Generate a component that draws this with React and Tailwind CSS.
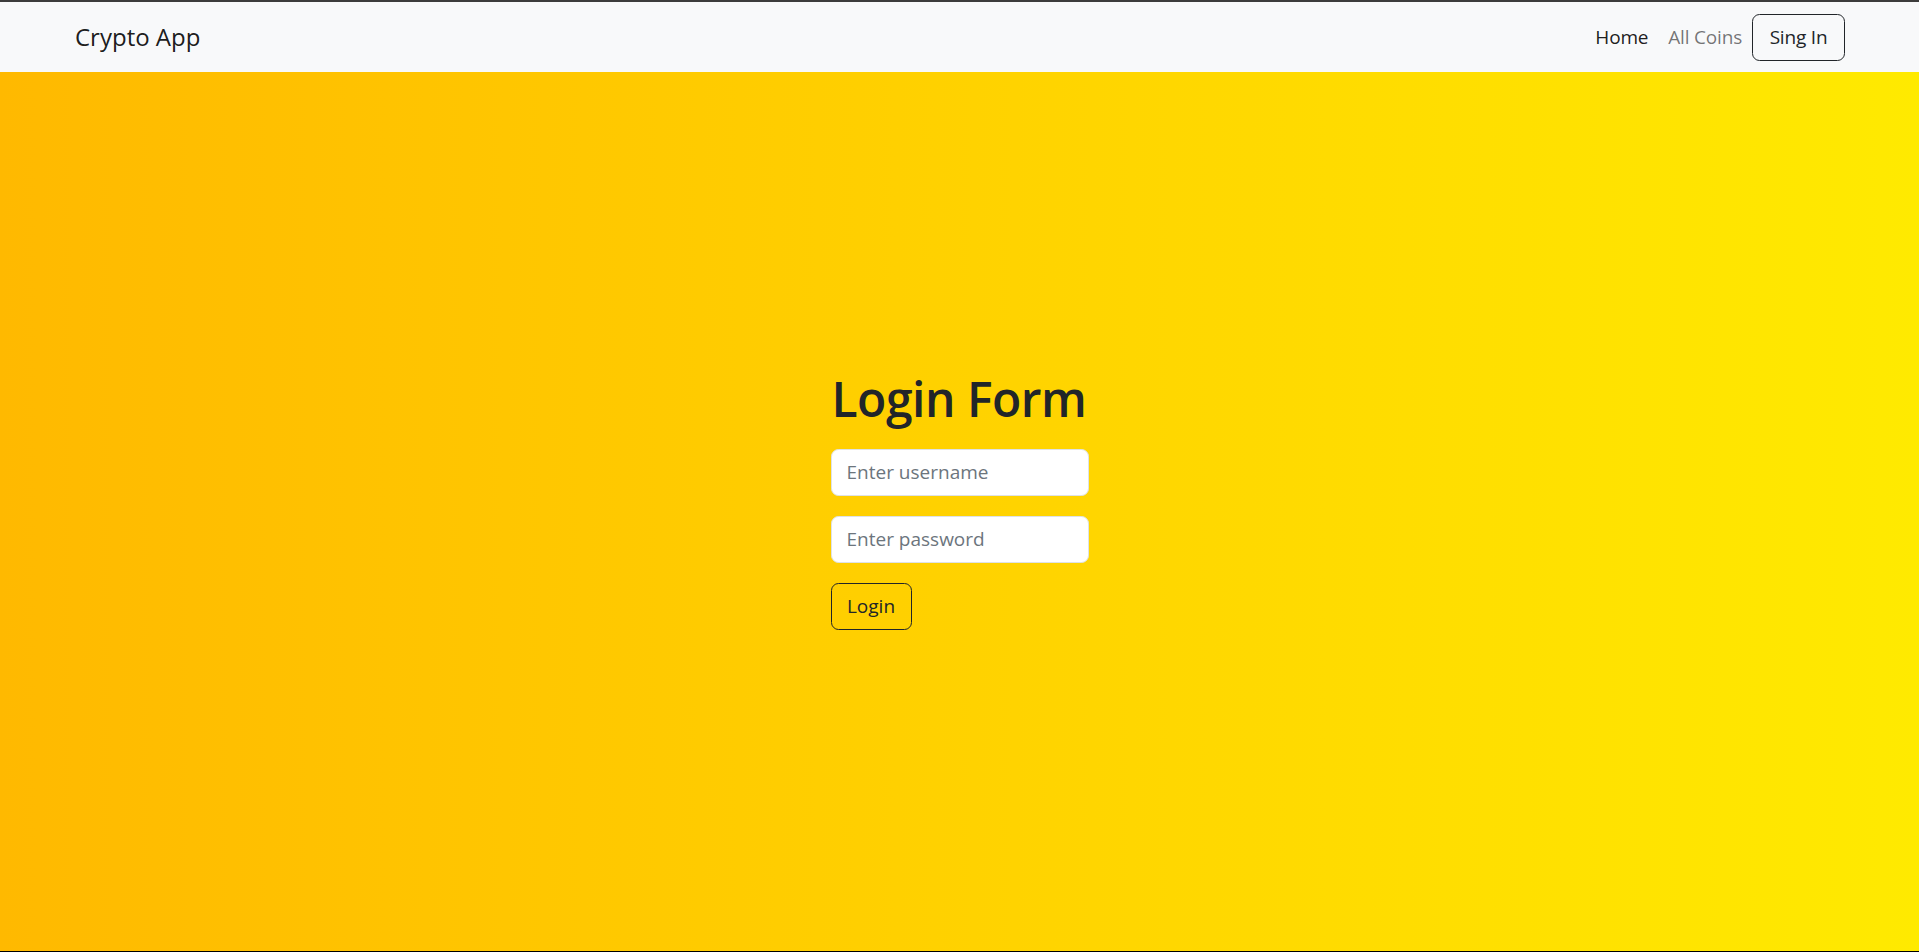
import React from "react";

export default function App() {
  const font = { fontFamily: '"Open Sans", "Noto Sans", "Liberation Sans", sans-serif' };
  return (
    <div
      className="h-screen flex flex-col border-t-2 border-b border-t-[#3c3c3c] border-b-black overflow-hidden"
      style={font}
    >
      <nav className="h-[70px] shrink-0 bg-[#f8f9fa] flex items-center justify-between pl-[75px] pr-[74px]">
        <a className="text-[24px] text-black/90 leading-none">Crypto App</a>
        <div className="flex items-center">
          <a className="text-[19px] text-black/90 px-[10px] tracking-[-0.01em]">Home</a>
          <a className="text-[19px] text-black/55 px-[10px] tracking-[-0.01em]">All Coins</a>
          <button className="h-[47px] w-[93px] text-[19px] text-[#212529] border border-[#212529] rounded-[7.5px] tracking-[-0.01em]">
            Sing In
          </button>
        </div>
      </nav>
      <main className="flex-1 flex items-center justify-center pb-[25px] bg-gradient-to-r from-[#ffb900] to-[#ffea00]">
        <form className="w-[258px] flex flex-col items-start" onSubmit={(e) => e.preventDefault()}>
          <h1 className="text-[48px] font-semibold leading-[60px] text-[#212529] mb-[20px] pl-[1px] tracking-[-0.01em] whitespace-nowrap">Login Form</h1>
          <input
            className="w-[258px] h-[47px] px-[15px] text-[19px] bg-white border border-[#dee2e6] rounded-[7.5px] placeholder:text-[#6c757d] text-[#212529] mb-[20px] outline-none"
            placeholder="Enter username"
          />
          <input
            type="password"
            className="w-[258px] h-[47px] px-[15px] text-[19px] bg-white border border-[#dee2e6] rounded-[7.5px] placeholder:text-[#6c757d] text-[#212529] mb-[20px] outline-none"
            placeholder="Enter password"
          />
          <button className="h-[47px] w-[81px] text-[19px] text-[#212529] border border-[#212529] rounded-[7.5px]">
            Login
          </button>
        </form>
      </main>
    </div>
  );
}
